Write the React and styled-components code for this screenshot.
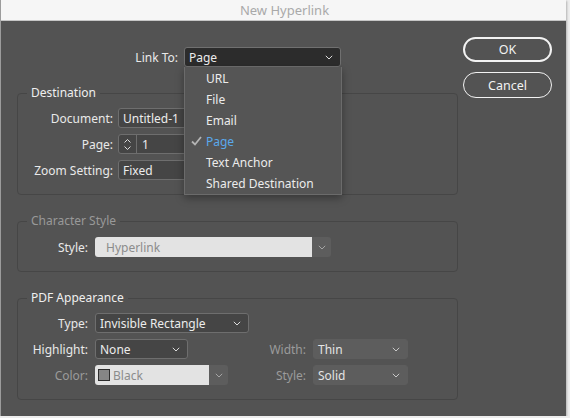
import React from "react";
import styled, { createGlobalStyle } from "styled-components";

const GlobalStyle = createGlobalStyle`
  html, body {
    margin: 0;
    padding: 0;
    background: #ededed;
  }
  body {
    font-family: "Noto Sans", "Liberation Sans", sans-serif;
    font-size: 12px;
  }
`;

const Window = styled.div`
  width: 565px;
  height: 416px;
  display: flex;
  flex-direction: column;
  background: #535353;
  border-left: 1px solid #9c9c9c;
  box-shadow: 1px 1px 2px rgba(0, 0, 0, 0.25);
  overflow: hidden;
`;

const TitleBar = styled.div`
  height: 20px;
  flex: none;
  display: flex;
  align-items: center;
  justify-content: center;
  background: #f6f6f6;
  border-bottom: 1px solid #c6c6c6;
  color: #a9a9a9;
  font-size: 13px;
  padding-left: 2px;
`;

const Body = styled.div`
  display: flex;
  gap: 5px;
  padding: 16px 0 0 16px;
`;

const LeftColumn = styled.div`
  width: 441px;
  padding-top: 10px;
  display: flex;
  flex-direction: column;
`;

const RightColumn = styled.div`
  width: 89px;
  display: flex;
  flex-direction: column;
  gap: 10px;
`;

const DialogButton = styled.button`
  height: ${(p) => (p.$primary ? "25px" : "26px")};
  border-radius: 13px;
  border: ${(p) => (p.$primary ? "2px" : "1px")} solid #f2f2f2;
  background: transparent;
  color: #f2f2f2;
  font-family: inherit;
  font-size: 12.5px;
  padding: 0;
`;

const LinkRow = styled.div`
  display: flex;
  align-items: center;
  gap: 6px;
  height: 20px;
`;

const Label = styled.span`
  width: ${(p) => p.$width}px;
  flex: none;
  text-align: right;
  color: ${(p) => (p.$dim ? "#9b9b9b" : "#e9e9e9")};
  white-space: nowrap;
`;

const SelectWrap = styled.div`
  position: relative;
  width: ${(p) => p.$width}px;
  height: 20px;
  flex: none;
`;

const Field = styled.div`
  box-sizing: border-box;
  width: ${(p) => (p.$width ? `${p.$width}px` : "100%")};
  height: 20px;
  display: flex;
  align-items: center;
  border-radius: 3px;
  padding: 0 7px 0 4px;
  color: #ececec;
  white-space: nowrap;
  overflow: hidden;
  ${(p) =>
    p.$variant === "dark" &&
    `background: #2c2c2c; border: 1px solid #707070;`}
  ${(p) =>
    p.$variant === "normal" &&
    `background: #454545; border: 1px solid #6e6e6e;`}
  ${(p) =>
    p.$variant === "muted" &&
    `background: #5d5d5d; border: 1px solid #5d5d5d; color: #e4e4e4;`}
`;

const FieldText = styled.span`
  flex: 1;
`;

const Chevron = ({ color = "#dcdcdc" }) => (
  <svg width="8" height="5" viewBox="0 0 8 5" style={{ flex: "none" }}>
    <polyline
      points="0.8,0.8 4,4 7.2,0.8"
      fill="none"
      stroke={color}
      strokeWidth="1"
    />
  </svg>
);

const Menu = styled.div`
  position: absolute;
  top: 20px;
  left: 0;
  width: 158px;
  box-sizing: border-box;
  padding-top: 1px;
  background: #555555;
  border: 1px solid #6b6b6b;
  border-top: none;
  box-shadow: 0 3px 8px rgba(0, 0, 0, 0.35);
  z-index: 5;
`;

const MenuItem = styled.div`
  height: 21px;
  display: flex;
  align-items: center;
  padding-left: 21px;
  position: relative;
  color: ${(p) => (p.$selected ? "#5aa9ec" : "#ececec")};
`;

const Check = styled.span`
  position: absolute;
  left: 6px;
  top: 5px;
  display: flex;
`;

const Group = styled.fieldset`
  margin: 18px 0 0;
  padding: ${(p) => p.$top}px 9px 14px;
  border: 1px solid #464646;
  border-radius: 4px;
  min-width: 0;
`;

const Legend = styled.legend`
  padding: 0 4px;
  line-height: 16px;
  color: ${(p) => (p.$dim ? "#999999" : "#efefef")};
`;

const FormGrid = styled.div`
  display: grid;
  grid-template-columns: ${(p) => p.$columns};
  grid-auto-rows: 20px;
  column-gap: ${(p) => p.$gap}px;
  row-gap: 6px;
  align-items: center;
`;

const Stepper = styled.div`
  box-sizing: border-box;
  width: 100%;
  height: 20px;
  display: flex;
  background: #454545;
  border: 1px solid #6e6e6e;
  border-radius: 3px;
  color: #ececec;
`;

const StepArrows = styled.div`
  width: 17px;
  flex: none;
  display: flex;
  flex-direction: column;
  align-items: center;
  justify-content: center;
  gap: 3px;
  border-right: 1px solid #6e6e6e;
`;

const StepValue = styled.div`
  display: flex;
  align-items: center;
  padding-left: 5px;
`;

const LightField = styled.div`
  width: ${(p) => p.$width}px;
  height: 20px;
  display: flex;
  border-radius: 3px;
  overflow: hidden;
`;

const LightInput = styled.div`
  flex: 1;
  display: flex;
  align-items: center;
  gap: 3px;
  padding-left: ${(p) => (p.$swatch ? 3 : 11)}px;
  background: #e3e3e3;
  color: #8c8c8c;
`;

const LightArrow = styled.div`
  width: 19px;
  display: flex;
  align-items: center;
  justify-content: center;
  background: #5d5d5d;
`;

const Swatch = styled.span`
  width: 12px;
  height: 12px;
  box-sizing: border-box;
  background: #858585;
  border: 1px solid #2d2d2d;
`;

const Empty = styled.span``;

const menuItems = ["URL", "File", "Email", "Page", "Text Anchor", "Shared Destination"];

const Select = ({ width, variant, children, chevron }) => (
  <Field $width={width} $variant={variant}>
    <FieldText>{children}</FieldText>
    <Chevron color={chevron} />
  </Field>
);

export default function App() {
  return (
    <>
      <GlobalStyle />
      <Window>
        <TitleBar>New Hyperlink</TitleBar>
        <Body>
          <LeftColumn>
            <LinkRow>
              <Label $width={161}>Link To:</Label>
              <SelectWrap $width={157}>
                <Select variant="dark">Page</Select>
                <Menu>
                  {menuItems.map((item) => (
                    <MenuItem key={item} $selected={item === "Page"}>
                      {item === "Page" && (
                        <Check>
                          <svg width="11" height="10" viewBox="0 0 11 10">
                            <polyline
                              points="1,5.5 4,8.5 10,1"
                              fill="none"
                              stroke="#b4b4b4"
                              strokeWidth="1.8"
                            />
                          </svg>
                        </Check>
                      )}
                      {item}
                    </MenuItem>
                  ))}
                </Menu>
              </SelectWrap>
            </LinkRow>

            <Group $top={7}>
              <Legend>Destination</Legend>
              <FormGrid $columns="86px 150px" $gap={5}>
                <Label>Document:</Label>
                <Select variant="normal">Untitled-1</Select>
                <Label>Page:</Label>
                <Stepper>
                  <StepArrows>
                    <svg width="7" height="4" viewBox="0 0 7 4">
                      <polyline points="0.5,3.5 3.5,0.5 6.5,3.5" fill="none" stroke="#dcdcdc" strokeWidth="1" />
                    </svg>
                    <svg width="7" height="4" viewBox="0 0 7 4">
                      <polyline points="0.5,0.5 3.5,3.5 6.5,0.5" fill="none" stroke="#dcdcdc" strokeWidth="1" />
                    </svg>
                  </StepArrows>
                  <StepValue>1</StepValue>
                </Stepper>
                <Label>Zoom Setting:</Label>
                <Select variant="normal">Fixed</Select>
              </FormGrid>
            </Group>

            <Group $top={8}>
              <Legend $dim>Character Style</Legend>
              <FormGrid $columns="61px 236px" $gap={7}>
                <Label>Style:</Label>
                <LightField $width={236}>
                  <LightInput>Hyperlink</LightInput>
                  <LightArrow>
                    <Chevron color="#a5a5a5" />
                  </LightArrow>
                </LightField>
              </FormGrid>
            </Group>

            <Group $top={7}>
              <Legend>PDF Appearance</Legend>
              <FormGrid $columns="61px 159px 45px 95px" $gap={7}>
                <Label>Type:</Label>
                <Select variant="normal" width={154}>Invisible Rectangle</Select>
                <Empty />
                <Empty />
                <Label>Highlight:</Label>
                <Select variant="normal" width={93}>None</Select>
                <Label $dim>Width:</Label>
                <Select variant="muted" chevron="#c8c8c8">Thin</Select>
                <Label $dim>Color:</Label>
                <LightField $width={133}>
                  <LightInput $swatch>
                    <Swatch />
                    Black
                  </LightInput>
                  <LightArrow>
                    <Chevron color="#a5a5a5" />
                  </LightArrow>
                </LightField>
                <Label $dim>Style:</Label>
                <Select variant="muted" chevron="#c8c8c8">Solid</Select>
              </FormGrid>
            </Group>
          </LeftColumn>

          <RightColumn>
            <DialogButton $primary>OK</DialogButton>
            <DialogButton>Cancel</DialogButton>
          </RightColumn>
        </Body>
      </Window>
    </>
  );
}
